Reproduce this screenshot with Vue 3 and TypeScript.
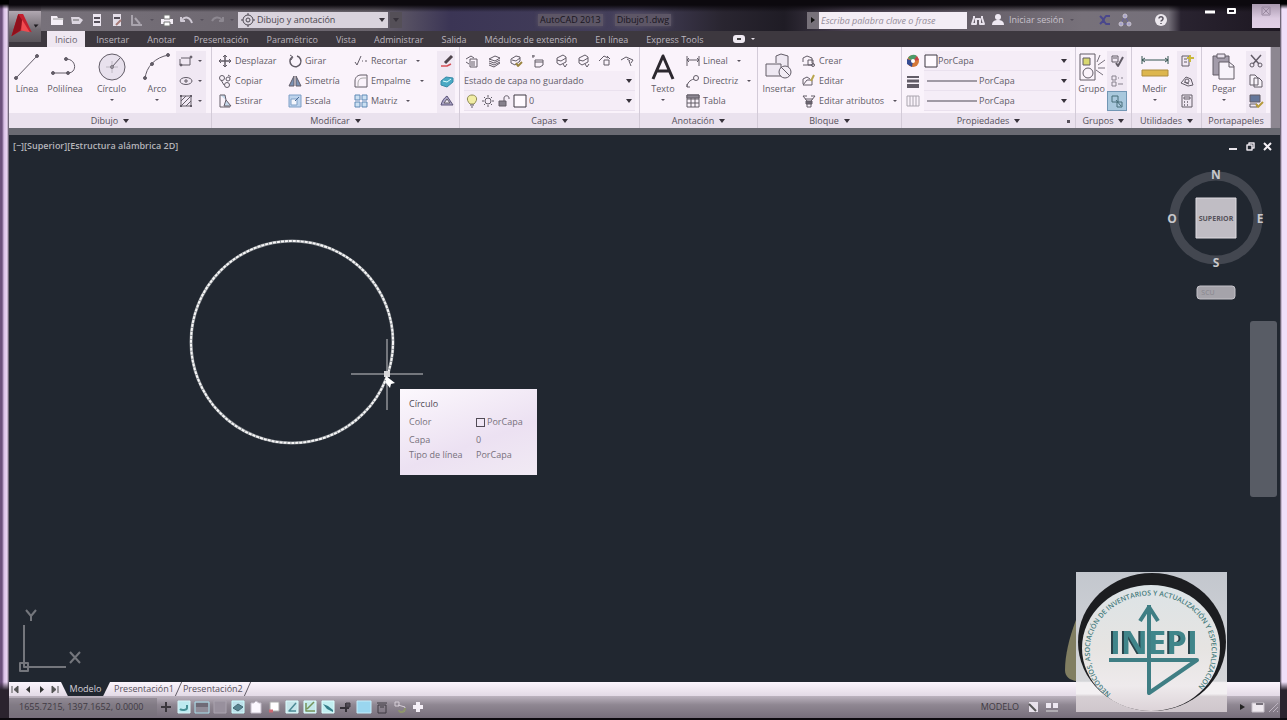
<script setup lang="ts">
import { ref } from 'vue'

interface Tool { label: string; icon: string; caret?: boolean }

const icons: Record<string, string> = {
  open: '<path d="M1 3h6l1 2h5v7H1z" fill="#f4eef6" stroke="none"/><path d="M3 6h11" stroke="#999"/>',
  folder: '<path d="M1 4h8l4 3-3 4H2z" fill="#dcd6e0" stroke="none"/><path d="M3 7h6" stroke="#666"/>',
  save: '<path d="M3 1h8v12H3z" fill="#ece6f0" stroke="none"/><path d="M4 5h6M4 9h6" stroke="#55505a" stroke-width="2"/>',
  saveAs: '<path d="M3 1h8v12H3z" fill="#e4dee8" stroke="none"/><path d="M4 5h6" stroke="#55505a" stroke-width="2"/><path d="M6 12l5-5" stroke="#a87c78" stroke-width="2"/>',
  cloud: '<path d="M2 2v10h10" stroke="#a9a4ad" stroke-width="2"/><path d="M5 5l5 6" stroke="#a9a4ad" stroke-width="2"/>',
  print: '<path d="M1 6h12v5H1z" fill="#f4eef6" stroke="none"/><path d="M4 2h6v4H4zM4 9h6v4H4z" fill="#fff" stroke="#777"/>',
  undo: '<path d="M1 4v4h4M2 7c3-4 8-3 10 3" stroke="#cfc9d4" stroke-width="2"/>',
  redo: '<path d="M13 4v4H9M12 7C9 3 4 4 2 8" stroke="#8d8891" stroke-width="2"/>',
  gear: '<circle cx="7" cy="7" r="5"/><circle cx="7" cy="7" r="2"/><path d="M7 0v2M7 12v2M0 7h2M12 7h2"/>',
  binoculars: '<path d="M3 3v2L1 11h4V6h4v5h4L11 5V3" stroke="#e8e2ec" stroke-width="2"/>',
  user: '<circle cx="7" cy="4" r="3" fill="#eee8f2" stroke="none"/><path d="M1 12c0-4 3-5 6-5s6 1 6 5z" fill="#eee8f2" stroke="none"/>',
  exchange: '<path d="M2 3l4 4-4 4M12 3H8l-3 4 3 4h4" stroke="#4a478c" stroke-width="2"/>',
  network: '<path d="M7 3L3 11h8z" stroke="#6864a4"/><circle cx="7" cy="3" r="2" fill="#a8a4cc"/><circle cx="3" cy="11" r="2" fill="#a8a4cc"/><circle cx="11" cy="11" r="2" fill="#a8a4cc"/>',
  help: '<circle cx="7" cy="7" r="6" fill="#ece8ee" stroke="none"/><path d="M5 5.500C5 3 9 3 9 5.500S7 7 7 8.500M7 10v1" stroke="#5a5560" stroke-width="1.500"/>',
  line: '<path d="M3 25L24 3"/><circle cx="3" cy="25" r="1.500" fill="currentColor"/><circle cx="24" cy="3" r="1.500" fill="currentColor"/>',
  polyline: '<path d="M2 20h15c9 0 9-13-1-14"/><circle cx="2" cy="20" r="1.500" fill="currentColor"/><circle cx="17" cy="20" r="1.500" fill="currentColor"/><circle cx="15" cy="6" r="1.500" fill="currentColor"/>',
  circle: '<circle cx="14" cy="14" r="13" fill="#e8e1ed"/><path d="M14 14l8-9"/><circle cx="14" cy="14" r="1.500" fill="currentColor"/><path d="M8 14h12M14 8v12" stroke="#b3adb8" stroke-width=".8"/>',
  arc: '<path d="M2 26C3 14 12 4 26 2"/><circle cx="2" cy="25" r="1.500" fill="currentColor"/><circle cx="9" cy="11" r="1.500" fill="currentColor"/><circle cx="25" cy="2" r="1.500" fill="currentColor"/>',
  rect: '<path d="M2 4h9v7H1V5"/><circle cx="12" cy="3" r="1" fill="currentColor"/><circle cx="2" cy="11" r="1" fill="currentColor"/>',
  ellipse: '<ellipse cx="7" cy="7" rx="6" ry="3.500"/><path d="M7 5v4M5 7h4"/>',
  hatch: '<path d="M2 2h10v10H2z"/><path d="M2 7l5-5M2 12L12 2M7 12l5-5"/><path d="M1 1h2v2H1zM11 1h2v2h-2zM1 11h2v2H1zM11 11h2v2h-2z" fill="currentColor" stroke="none"/>',
  move: '<path d="M7 1v12M1 7h12" stroke-width="1.500"/><path d="M5 3l2-2 2 2M5 11l2 2 2-2M3 5L1 7l2 2M11 5l2 2-2 2"/>',
  copy: '<circle cx="4" cy="4" r="2.500"/><circle cx="10" cy="5" r="2"/><circle cx="9" cy="11" r="2.500"/><path d="M3 6l3 5M10 1l3 2"/>',
  stretch: '<path d="M2 1v12h10"/><path d="M2 1h5l1 5M6 12l2-6 5 6z" fill="#c6d8ea"/>',
  rotate: '<path d="M4 3a5.500 5.500 0 1 0 5-1" stroke-width="1.500"/><path d="M2 1l3 2-2 3"/>',
  mirror: '<path d="M6 2v10H1zM8 2v10h5z" fill="#7a92b4"/>',
  scale: '<path d="M1 1h12v12H1z" fill="#bdd3ec" stroke="#7f9fc6"/><path d="M3 5h6v6H3z" fill="#f4f6fc" stroke="#7f9fc6"/><path d="M7 7l4-4" stroke="#4a6a96"/>',
  trim: '<path d="M1 8l2 3 4-9M8 7h1M11 7h2"/>',
  fillet: '<path d="M1 13V7c0-4 3-6 6-6h6v12z"/><path d="M4 13V9c0-3 2-5 5-5h4" stroke="#aaa"/>',
  array: '<path d="M1 1h5v5H1zM8 1h5v5H8zM1 8h5v5H1zM8 8h5v5H8z" fill="#cce0f2" stroke="#5f89b5"/>',
  erase: '<path d="M12 2L5 9" stroke="#4d434b" stroke-width="3"/><path d="M1 12h6l4-2" stroke="#d65058" stroke-width="1.500"/>',
  explode: '<path d="M1 7l5-4 7 1v4l-6 5-6-2z" fill="#4aa9c4" stroke="#378aa8"/><path d="M3 7l4 1 4-3" stroke="#dff"/>',
  offset: '<path d="M1 11c1-4 3-7 6-9l6 9z" fill="#aba4c6" stroke="#5a5378"/><path d="M4 9l3-4 3 4z" fill="#efe9f4"/>',
  layers: '<path d="M2 5l6-3 5 2-5 3zM2 7l5 2 6-3M2 9l5 2 6-3M2 11l5 2 6-4"/>',
  layerA: '<path d="M1 5l5-3 3 2M1 8l3 2M5 5h7v8H5zM7 7v5M9 7v5"/>',
  layerB: '<path d="M2 5l5-3 4 1v4l-5 4-4-2zM3 6l4 1 4-3"/><path d="M7 9l2 3 4-4" stroke="#9b8540" stroke-width="2"/>',
  layerC: '<path d="M1 2h3M2 1v3M4 6h8v5l-3 2H4zM4 8h8"/>',
  layerD: '<path d="M3 4l6-3 3 2v5L6 11l-3-2zM3 6l4 1 5-3"/><path d="M9 10l2 3 2-3"/>',
  layerE: '<path d="M1 7l5-5 4 2M6 6h5v5H6zM9 2l3 3"/>',
  layerF: '<path d="M1 6l5-3 7 3-2 3M9 7l2 5M7 5l3 2"/>',
  bulb: '<path d="M5 10C0 5 3 1 7 1s7 4 2 9z" fill="#f1eca4" stroke="#8e8a55"/><path d="M5 11h4M6 13h2"/>',
  sun: '<circle cx="7" cy="7" r="3"/><path d="M7 1v2M7 11v2M1 7h2M11 7h2M3 3l1 1M10 10l1 1M11 3l-1 1M3 11l1-1"/>',
  lock: '<path d="M2 7h7v5H2z" fill="#86818c"/><path d="M7 7V4c0-3 5-3 5 0v1"/>',
  square: '<path d="M1 1h12v12H1z" fill="#fffaff" stroke="#3e3942"/>',
  dimension: '<path d="M1 2v10M13 2v10M1 6h12M3 4L1 6l2 2M11 4l2 2-2 2"/>',
  leader: '<path d="M1 13C1 9 4 6 8 5"/><circle cx="10" cy="4" r="2.500"/><path d="M1 10v3h3"/>',
  table: '<path d="M1 1h12v12H1zM1 5h12M1 9h12M5 2v11M9 2v11"/><path d="M1 1h12v3H1z" fill="#8e8894"/>',
  insert: '<path d="M1 11h15v12H1zM11 10V3l5-2 7 2v11" fill="#eee8f2"/><circle cx="20" cy="19" r="6" fill="#f2ecf5"/><path d="M16 14l9 9"/>',
  create: '<path d="M1 8V4l4-2 5 2v5M1 11h9M6 6h5v5H6z"/><circle cx="11" cy="11" r="1.500"/>',
  edit: '<path d="M1 10V5l4-2 3 2M1 11h9V6H5z"/><path d="M9 7l3-6" stroke="#b8a54d" stroke-width="2"/>',
  attributes: '<path d="M1 2l4 5v6h4V7l4-5M3 5h8M6 9h2M1 2h4M9 2h4"/><path d="M4 7h6v3H4z" fill="#6b6571"/>',
  wheel: '<circle cx="7" cy="7" r="6" fill="#d57838" stroke="none"/><path d="M7 7L2 4a6 6 0 0 1 9-2z" fill="#4d9a6b" stroke="none"/><path d="M7 7L1 5v5l5 3z" fill="#354c93" stroke="none"/><path d="M7 7l4-5 2 4z" fill="#c4414a" stroke="none"/><circle cx="7" cy="7" r="2" fill="#fff" stroke="none"/>',
  weights: '<path d="M1 3h12" stroke-width="2"/><path d="M1 7h12" stroke-width="3"/><path d="M1 12h12" stroke-width="4"/>',
  linetypes: '<path d="M1 2h12v10H1zM4 2v10M7 2v10M10 2v10" stroke="#aaa5af"/>',
  group: '<path d="M2 1h15v26H2z"/><path d="M5 5h7v7H5z" fill="#d9d871"/><circle cx="10" cy="20" r="5"/><path d="M19 9l3-7M20 12l7-5M20 15h7M18 17l7 5" stroke="#77717c"/>',
  groupEdit: '<path d="M2 2h6v6H2zM3 4h4"/><path d="M6 9l2 3 5-9" stroke-width="2"/>',
  ungroup: '<path d="M2 2h4v4H2zM2 8h4v4H2zM8 4h1M11 4h2M8 10h5" stroke="#87818d"/>',
  groupPick: '<path d="M2 2h6v6H2zM7 8h5v5H7zM6 6l5 6" stroke="#466d78"/>',
  measure: '<path d="M1 3v8M27 3v8M1 7h26M4 5L1 7l3 2M24 5l3 2-3 2" stroke="#345450"/><path d="M1 17h26v6H1z" fill="#ddb64e" stroke="#ae8d40"/>',
  select: '<path d="M2 2h7v10H2zM4 5h3M4 8h3"/><path d="M10 1v7M7 4h7" stroke="#c9b83c" stroke-width="2"/>',
  idPoint: '<path d="M1 9l5-6 5 2 2 6-5 1zM4 8l5 2"/><circle cx="7" cy="7" r="2"/>',
  calculator: '<path d="M2 1h10v12H2zM4 3h6v2H4z"/><path d="M4 8h1M7 8h1M10 8h0M4 11h1M7 11h1" stroke-width="1.500"/>',
  paste: '<path d="M3 3h16v19H3z" fill="#a39caa"/><path d="M7 1h8v4H7z" fill="#e8e1ec"/><path d="M9 9h10l5 4v13H9z" fill="#f8f3fa"/><path d="M19 9v5h5"/>',
  cut: '<path d="M2 1l8 9M12 1L4 10" stroke-width="1.500"/><circle cx="3" cy="11" r="2"/><circle cx="11" cy="11" r="2"/>',
  clipboard: '<path d="M1 1h5l3 3v7H1zM5 4h5l3 3v6H5z" fill="#f8f3fa"/>',
  match: '<path d="M1 1h10v7H1z" fill="#64769a"/><path d="M1 10h7v3H1z"/><path d="M7 10l2 3 5-5" stroke="#b69b3a" stroke-width="2"/>',
  plus: '<path d="M7 2v10M2 7h10" stroke="#3b373d" stroke-width="2"/>',
  snap: '<path d="M1 1h12v12H1z" fill="#bdeaf0" stroke="#d8f4f8"/><path d="M10 5v3c0 2-5 3-7 1" stroke="#469096" stroke-width="2"/>',
  grid: '<path d="M0 2h14v11H0z" fill="#8f8b97" stroke="#aaddea"/><path d="M1 3h12v4H1z" fill="#6f6a76" stroke="none"/>',
  ortho: '<path d="M1 1h12v12H1z" fill="#98909d" stroke="#aaa3af"/>',
  polar: '<path d="M1 1h12v12H1z" fill="#bde0ea" stroke="#cff"/><path d="M2 8l5-4 5 3-5 4z" fill="#578591" stroke="#456a74"/>',
  page: '<path d="M2 3h3l2-2 3 2h2v10H2z" fill="#fcf8ff" stroke="#c5becb"/>',
  pageRed: '<path d="M3 2h9v9H3z" fill="#fff" stroke="#aaa"/><path d="M2 11h4" stroke="#cb6872" stroke-width="3"/>',
  angle: '<path d="M1 1h12v12H1z" fill="#c6e5ea" stroke="#dff"/><path d="M11 3L4 11h7" stroke="#4c8995" stroke-width="1.500"/>',
  ducs: '<path d="M1 1h12v12H1z" fill="#c4e8e9" stroke="#dff"/><path d="M3 3v8h9M4 9l7-7" stroke="#75935b" stroke-width="1.500"/>',
  dyn: '<path d="M1 1h12v12H1z" fill="#c2eef0" stroke="#dff"/><path d="M2 4l5 2 5 4v2L6 9z" fill="#347e89" stroke="none"/>',
  lwt: '<path d="M1 8h9M7 3v9" stroke="#343037" stroke-width="2"/><path d="M7 3h4v4H7z" fill="#514b55"/>',
  fill: '<path d="M0 1h14v12H0z" fill="#9ad6ef" stroke="#c6edfa"/>',
  bin: '<path d="M2 3h10M3 5h8v8H3zM5 7h4"/>',
  cycle: '<path d="M2 2h4v4H2zM5 5l7 2-1 5" stroke="#d5cdd6"/><path d="M12 8c0 5-6 5-6 2" stroke="#8d946c" stroke-width="2"/>',
  plusWhite: '<path d="M7 2v10M2 7h10" stroke="#f5eff7" stroke-width="4"/>',
  sheet: '<path d="M2 2h9v10H2z" fill="#e9e2ec" stroke="none"/><path d="M2 4l7 7" stroke="#555" stroke-width="2"/>',
  sheets: '<path d="M1 3h5v5H1zM8 3h5v5H8z" fill="#eee8f2" stroke="none"/><path d="M1 11h12" stroke="#ddd"/>',
  screen: '<path d="M1 3h12v9H1z" fill="#eee8ee" stroke="#c7c0c9"/><path d="M5 3h7v2H5z" fill="#77717a" stroke="none"/>',
  small: '<path d="M4 4l5 3-5 3" fill="#222" stroke="none"/>',
  grip: '<path d="M12 3L3 12M12 7l-5 5M12 11l-1 1" stroke="#bcb3c0"/>',
}

const quickTools: [string, string, boolean][] = [
  ['open', 'Nuevo', false], ['folder', 'Abrir', false], ['save', 'Guardar', false],
  ['saveAs', 'Guardar como', false], ['cloud', 'Nube', true], ['print', 'Trazar', false],
  ['undo', 'Deshacer', true], ['redo', 'Rehacer', true],
]
const tabs = ['Inicio', 'Insertar', 'Anotar', 'Presentación', 'Paramétrico', 'Vista', 'Administrar', 'Salida', 'Módulos de extensión', 'En línea', 'Express Tools']
const activeTab = ref('Inicio')

const drawTools: Tool[] = [
  { label: 'Línea', icon: 'line' }, { label: 'Polilínea', icon: 'polyline' },
  { label: 'Círculo', icon: 'circle', caret: true }, { label: 'Arco', icon: 'arc', caret: true },
]
const modifyColumns: Tool[][] = [
  [{ label: 'Desplazar', icon: 'move' }, { label: 'Copiar', icon: 'copy' }, { label: 'Estirar', icon: 'stretch' }],
  [{ label: 'Girar', icon: 'rotate' }, { label: 'Simetría', icon: 'mirror' }, { label: 'Escala', icon: 'scale' }],
  [{ label: 'Recortar', icon: 'trim', caret: true }, { label: 'Empalme', icon: 'fillet', caret: true }, { label: 'Matriz', icon: 'array', caret: true }],
]
const noteTools: Tool[] = [
  { label: 'Lineal', icon: 'dimension', caret: true }, { label: 'Directriz', icon: 'leader', caret: true }, { label: 'Tabla', icon: 'table' },
]
const blockTools: Tool[] = [
  { label: 'Crear', icon: 'create' }, { label: 'Editar', icon: 'edit' }, { label: 'Editar atributos', icon: 'attributes', caret: true },
]
const layerTools = ['layerA', 'layers', 'layerB', 'layerC', 'layerD', 'layerD', 'layerE', 'layerF']
const statusTools = ['plus', 'snap', 'grid', 'ortho', 'polar', 'page', 'pageRed', 'angle', 'ducs', 'dyn', 'lwt', 'fill', 'bin', 'cycle', 'plusWhite']
</script>

<template>
  <div class="window">
    <div class="frame">
      <header class="header">
        <button class="app-button" aria-label="Menú de la aplicación">
          <svg viewBox="0 0 32 32" class="app-logo">
            <path d="M9 3h5l9 19-9-3-12 7z" fill="#c41f2d" />
            <path d="M9 3L2 26l9-6 3-9z" fill="#8f101c" />
            <path d="M13 9l8 13-9-2z" fill="#f04b50" />
            <path d="M25 14h5l-3 3z" fill="#1d1a1f" />
          </svg>
        </button>

        <div class="titlebar">
          <div class="quick">
            <template v-for="[icon, name, caret] in quickTools" :key="name">
              <button class="plain" :aria-label="name"><svg class="ico" viewBox="0 0 14 14" v-html="icons[icon]" /></button>
              <i v-if="caret" class="tiny-caret"></i>
            </template>
          </div>
          <label class="workspace">
            <svg class="ico" viewBox="0 0 14 14" v-html="icons.gear" />
            <select aria-label="Espacio de trabajo"><option>Dibujo y anotación</option></select>
            <i class="caret"></i>
          </label>
          <button class="more" aria-label="Personalizar"><i class="caret"></i></button>
          <div class="doc-title"><span>AutoCAD 2013</span><span>Dibujo1.dwg</span></div>
          <button class="search-toggle" aria-label="Contraer"><i class="arrow-right"></i></button>
          <input class="search" type="text" aria-label="Buscar" placeholder="Escriba palabra clave o frase" />
          <div class="info">
            <button class="plain" aria-label="Buscar ahora"><svg class="ico" viewBox="0 0 14 14" v-html="icons.binoculars" /></button>
            <button class="plain sign-in"><svg class="ico" viewBox="0 0 14 14" v-html="icons.user" />Iniciar sesión</button>
            <i class="tiny-caret"></i>
            <button class="plain exchange" aria-label="Exchange"><svg class="ico" viewBox="0 0 14 14" v-html="icons.exchange" /></button>
            <button class="plain" aria-label="Conexión"><svg class="ico" viewBox="0 0 14 14" v-html="icons.network" /></button>
            <button class="plain help" aria-label="Ayuda"><svg class="ico" viewBox="0 0 14 14" v-html="icons.help" /></button>
          </div>
          <div class="window-buttons">
            <button class="plain" aria-label="Minimizar"><svg class="ico" viewBox="0 0 14 14"><path d="M2 8h10" stroke="#fff" stroke-width="3" /></svg></button>
            <button class="plain" aria-label="Maximizar"><svg class="ico" viewBox="0 0 14 14"><path d="M4 5h7v4H4z" stroke="#fff" stroke-width="2" /></svg></button>
            <button class="plain close" aria-label="Cerrar"><svg class="ico" viewBox="0 0 14 14"><path d="M3 3h8v8H3zM4 4l6 6M10 4l-6 6" stroke="#98889f" /></svg></button>
          </div>
        </div>

        <nav class="tabs">
          <button v-for="tab in tabs" :key="tab" class="tab" :class="{ active: tab === activeTab }" @click="activeTab = tab">{{ tab }}</button>
          <button class="tab ribbon-mode" aria-label="Minimizar cinta"><span></span><i class="tiny-caret light"></i></button>
        </nav>
      </header>

      <section class="ribbon">
        <section class="panel">
          <div class="body draw">
            <button v-for="t in drawTools" :key="t.label" class="big">
              <svg viewBox="0 0 28 28" v-html="icons[t.icon]" /><span>{{ t.label }}</span><i v-if="t.caret" class="tiny-caret"></i>
            </button>
            <div class="stack outlined">
              <button v-for="n in ['rect', 'ellipse', 'hatch']" :key="n" class="small" :aria-label="n"><svg class="ico" viewBox="0 0 14 14" v-html="icons[n]" /><i class="tiny-caret"></i></button>
            </div>
          </div>
          <button class="panel-title">Dibujo<i class="caret"></i></button>
        </section>

        <section class="panel">
          <div class="body modify">
            <div v-for="(col, i) in modifyColumns" :key="i" class="stack">
              <button v-for="t in col" :key="t.label" class="small"><svg class="ico" viewBox="0 0 14 14" v-html="icons[t.icon]" />{{ t.label }}<i v-if="t.caret" class="tiny-caret"></i></button>
            </div>
            <div class="stack outlined">
              <button v-for="n in ['erase', 'explode', 'offset']" :key="n" class="small" :aria-label="n"><svg class="ico" viewBox="0 0 14 14" v-html="icons[n]" /></button>
            </div>
          </div>
          <button class="panel-title">Modificar<i class="caret"></i></button>
        </section>

        <section class="panel">
          <div class="body stack layers">
            <div class="layer-tools">
              <button v-for="(n, i) in layerTools" :key="i" class="small" :aria-label="'Capa ' + i"><svg class="ico" viewBox="0 0 14 14" v-html="icons[n]" /></button>
            </div>
            <label class="combo"><select aria-label="Estado de capa"><option>Estado de capa no guardado</option></select><i class="caret"></i></label>
            <label class="combo layer-combo">
              <svg v-for="n in ['bulb', 'sun', 'lock', 'square']" :key="n" class="ico" viewBox="0 0 14 14" v-html="icons[n]" />
              <select aria-label="Capa"><option>0</option></select><i class="caret"></i>
            </label>
          </div>
          <button class="panel-title">Capas<i class="caret"></i></button>
        </section>

        <section class="panel">
          <div class="body notes">
            <button class="big">
              <svg viewBox="0 0 28 28"><path d="M4 26L14 3l10 23M8 18h12" stroke="#2c282f" stroke-width="3" /></svg><span>Texto</span><i class="tiny-caret"></i>
            </button>
            <div class="stack">
              <button v-for="t in noteTools" :key="t.label" class="small"><svg class="ico" viewBox="0 0 14 14" v-html="icons[t.icon]" />{{ t.label }}<i v-if="t.caret" class="tiny-caret"></i></button>
            </div>
          </div>
          <button class="panel-title">Anotación<i class="caret"></i></button>
        </section>

        <section class="panel">
          <div class="body blocks">
            <button class="big"><svg viewBox="0 0 28 28" v-html="icons.insert" /><span>Insertar</span></button>
            <div class="stack">
              <button v-for="t in blockTools" :key="t.label" class="small"><svg class="ico" viewBox="0 0 14 14" v-html="icons[t.icon]" />{{ t.label }}<i v-if="t.caret" class="tiny-caret"></i></button>
            </div>
          </div>
          <button class="panel-title">Bloque<i class="caret"></i></button>
        </section>

        <section class="panel">
          <div class="body stack properties">
            <label class="property"><svg class="ico" viewBox="0 0 14 14" v-html="icons.wheel" />
              <span class="combo"><svg class="ico" viewBox="0 0 14 14" v-html="icons.square" /><select aria-label="Color"><option>PorCapa</option></select><i class="caret"></i></span>
            </label>
            <label class="property"><svg class="ico" viewBox="0 0 14 14" v-html="icons.weights" />
              <span class="combo"><i class="rule"></i><select aria-label="Grosor de línea"><option>PorCapa</option></select><i class="caret"></i></span>
            </label>
            <label class="property"><svg class="ico" viewBox="0 0 14 14" v-html="icons.linetypes" />
              <span class="combo"><i class="rule"></i><select aria-label="Tipo de línea"><option>PorCapa</option></select><i class="caret"></i></span>
            </label>
          </div>
          <button class="panel-title">Propiedades<i class="caret"></i><i class="launcher"></i></button>
        </section>

        <section class="panel">
          <div class="body pair">
            <button class="big"><svg viewBox="0 0 28 28" v-html="icons.group" /><span>Grupo</span></button>
            <div class="stack outlined">
              <button v-for="n in ['groupEdit', 'ungroup', 'groupPick']" :key="n" class="small" :class="{ pressed: n === 'groupPick' }" :aria-label="n"><svg class="ico" viewBox="0 0 14 14" v-html="icons[n]" /></button>
            </div>
          </div>
          <button class="panel-title">Grupos<i class="caret"></i></button>
        </section>

        <section class="panel">
          <div class="body pair">
            <button class="big"><svg viewBox="0 0 28 28" v-html="icons.measure" /><span>Medir</span><i class="tiny-caret"></i></button>
            <div class="stack outlined">
              <button v-for="n in ['select', 'idPoint', 'calculator']" :key="n" class="small" :aria-label="n"><svg class="ico" viewBox="0 0 14 14" v-html="icons[n]" /></button>
            </div>
          </div>
          <button class="panel-title">Utilidades<i class="caret"></i></button>
        </section>

        <section class="panel">
          <div class="body pair">
            <button class="big"><svg viewBox="0 0 28 28" v-html="icons.paste" /><span>Pegar</span><i class="tiny-caret"></i></button>
            <div class="stack outlined">
              <button v-for="n in ['cut', 'clipboard', 'match']" :key="n" class="small" :aria-label="n"><svg class="ico" viewBox="0 0 14 14" v-html="icons[n]" /></button>
            </div>
          </div>
          <button class="panel-title">Portapapeles</button>
        </section>
      </section>

      <main class="canvas">
        <div class="view-head">
          <span>[−][Superior][Estructura alámbrica 2D]</span>
          <div class="view-buttons">
            <button class="plain" aria-label="Minimizar vista"><svg viewBox="0 0 9 9"><path d="M0 7h8" stroke="#e8e4ea" stroke-width="2" /></svg></button>
            <button class="plain" aria-label="Restaurar vista"><svg viewBox="0 0 9 9"><path d="M1 3h5v5H1zM3 3V1h5v5H6" stroke="#e8e4ea" stroke-width="1.500" /></svg></button>
            <button class="plain" aria-label="Cerrar vista"><svg viewBox="0 0 9 9"><path d="M1 1l7 7M8 1L1 8" stroke="#f4f0f5" stroke-width="2" /></svg></button>
          </div>
        </div>

        <svg class="drawing" width="440" height="340" viewBox="0 0 440 340">
          <circle cx="283" cy="207" r="101" stroke="#8f9398" stroke-width="3" />
          <circle cx="283" cy="207" r="101" stroke="#f6f6f6" stroke-width="2" stroke-dasharray="3 1" />
          <path d="M342 239h72M378 204v71" stroke="#74777d" stroke-width="2" />
          <path d="M375 236h6v6h-6z" fill="#d8d8da" />
          <path d="M377 241l9 7-4 1-1 4-4-5z" fill="#fff" />
        </svg>

        <dl class="tooltip">
          <div class="tip-title">Círculo</div>
          <dt>Color</dt><dd><i class="swatch"></i>PorCapa</dd>
          <dt>Capa</dt><dd>0</dd>
          <dt>Tipo de línea</dt><dd>PorCapa</dd>
        </dl>

        <svg class="view-cube" width="100" height="140" viewBox="0 0 100 140">
          <circle cx="50" cy="53" r="42" stroke="#434750" stroke-width="9" />
          <path d="M30 33h40v40H30z" fill="#c0bdc4" stroke="#dedbe0" />
          <g class="compass">
            <text x="50" y="14">N</text><text x="50" y="102">S</text><text x="6" y="58">O</text><text x="94" y="58">E</text>
          </g>
          <text class="face" x="50" y="56">SUPERIOR</text>
          <rect x="31" y="121" width="38" height="13" rx="3" fill="#a5a3aa" stroke="#c4c2c8" />
          <text class="scp" x="42" y="130">SCU</text>
        </svg>

        <div class="navbar"></div>

        <svg class="ucs" width="76" height="64" viewBox="0 0 76 64">
          <path d="M15 17v42h42M11 55h8v8h-8zM17 2l5 6 5-6M22 8v5M61 44l10 11M71 44L61 55" stroke="#74767c" stroke-width="2" />
        </svg>
      </main>

      <nav class="sheets">
        <button class="nav-button" aria-label="Primera"><svg viewBox="0 0 9 9"><path d="M1 1v7M7 1L3 4.500 7 8z" fill="#555" stroke="#555" /></svg></button>
        <button class="nav-button" aria-label="Anterior"><svg viewBox="0 0 9 9"><path d="M6 1L2 4.500 6 8z" fill="#333" /></svg></button>
        <button class="nav-button" aria-label="Siguiente"><svg viewBox="0 0 9 9"><path d="M3 1l4 3.500L3 8z" fill="#333" /></svg></button>
        <button class="nav-button" aria-label="Última"><svg viewBox="0 0 9 9"><path d="M8 1v7M2 1l4 3.500L2 8z" fill="#555" stroke="#555" /></svg></button>
        <button class="sheet current">Modelo</button>
        <button class="sheet">Presentación1</button><i class="slash"></i>
        <button class="sheet">Presentación2</button><i class="slash"></i>
      </nav>

      <footer class="status">
        <output class="coords">1655.7215, 1397.1652, 0.0000</output>
        <div class="status-tools">
          <button v-for="n in statusTools" :key="n" class="plain" :aria-label="n"><svg class="ico" viewBox="0 0 14 14" v-html="icons[n]" /></button>
        </div>
        <div class="status-right">
          <button class="plain model">MODELO</button>
          <button class="plain" aria-label="Presentación"><svg class="ico" viewBox="0 0 14 14" v-html="icons.sheet" /></button>
          <button class="plain" aria-label="Presentaciones"><svg class="ico" viewBox="0 0 14 14" v-html="icons.sheets" /></button>
        </div>
        <div class="status-end">
          <button class="plain" aria-label="Opciones"><svg class="ico" viewBox="0 0 14 14" v-html="icons.small" /></button>
          <button class="plain" aria-label="Pantalla limpia"><svg class="ico" viewBox="0 0 14 14" v-html="icons.screen" /></button>
          <svg class="ico" viewBox="0 0 14 14" v-html="icons.grip" />
        </div>
      </footer>
    </div>

    <svg class="emblem" width="164" height="140" viewBox="0 0 164 140">
      <defs>
        <linearGradient id="paper" x1="0" y1="0" x2="0" y2="1">
          <stop offset="0" stop-color="#c3c7ce" /><stop offset=".78" stop-color="#d5d6d9" />
          <stop offset=".79" stop-color="#f3f0f2" /><stop offset=".87" stop-color="#f3f0f2" />
          <stop offset=".89" stop-color="#d6cfd3" /><stop offset="1" stop-color="#cfc6cc" />
        </linearGradient>
        <linearGradient id="disc" x1="0" y1="0" x2="0" y2="1">
          <stop offset="0" stop-color="#dce3e6" /><stop offset=".5" stop-color="#e6e4e2" />
          <stop offset=".8" stop-color="#eeeaec" /><stop offset="1" stop-color="#dcd3d8" />
        </linearGradient>
      </defs>
      <path d="M13 48C6 66 2 84 2 98c0 7 5 10 11 11z" fill="#817e61" />
      <rect x="13" width="151" height="140" fill="url(#paper)" />
      <ellipse cx="89" cy="70" rx="74" ry="69" fill="#1c1d20" />
      <ellipse cx="88" cy="76" rx="69" ry="63" fill="url(#disc)" />
      <path id="ring" d="M48 122A61 56 0 1 1 133 117" />
      <text class="ring-text"><textPath href="#ring">NEGOCIOS, ASOCIACIÓN DE INVENTARIOS Y ACTUALIZACIÓN Y ESPECIALIZACIÓN</textPath></text>
      <text class="name" x="91" y="82">INEPI</text>
      <path d="M46 88h88L86 121V33M77 49l9-14 9 14" stroke="#3f7e84" stroke-width="4" />
    </svg>
  </div>
</template>

<style>
body { margin: 0; background: #17131b; }
</style>

<style scoped>
.window {
  position: relative;
  box-sizing: border-box;
  min-height: 100vh;
  display: flex;
  padding: 0 7px 2px 9px;
  background:
    linear-gradient(#000 4px, transparent 9px),
    linear-gradient(#0c090e, #0c090e) bottom / 100% 2px no-repeat,
    linear-gradient(transparent 682px, #2b232e 690px),
    linear-gradient(90deg, #6c517c 2px, #d9bfe6 4px, #ecd8f4 7px, #4b4453 9px, #6f6675 50%, #463f4d calc(100% - 7px), #f0dff8 calc(100% - 5px));
  font: 9px/12px "Open Sans", "Noto Sans", sans-serif;
  color: #625c67;
}
.frame { flex: 1; min-width: 0; display: flex; flex-direction: column; }
button, select, input { font: inherit; color: inherit; border: 0; padding: 0; margin: 0; background: none; border-radius: 0; }
button { white-space: nowrap; cursor: pointer; }
svg { fill: none; stroke-linejoin: round; flex: none; display: block; overflow: visible; }
.ico { width: 14px; height: 14px; stroke: currentColor; }
.big svg { width: 28px; height: 28px; stroke: currentColor; }
.plain { display: flex; align-items: center; gap: 4px; }
.caret { flex: none; border: 3px solid transparent; border-top: 4px solid #37323b; border-bottom: 0; }
.tiny-caret { flex: none; border: 2px solid transparent; border-top: 2px solid #57515c; border-bottom: 0; }
.tiny-caret.light { border-top-color: #e5e0e8; }

.header { display: grid; grid-template-columns: 32px 1fr; grid-template-rows: 31px 16px; background: linear-gradient(#0c090e 5px, #5d565f 11px, #3d383f 31px); }
.app-button { grid-row: 1 / 3; margin: 11px 0 5px; background: linear-gradient(#b1a8b1, #716b72 60%, #5a555b); }
.app-logo { width: 32px; height: 31px; }
.titlebar {
  display: flex;
  align-items: center;
  padding-top: 9px;
  box-sizing: border-box;
  background:
    linear-gradient(#0c090e 5px, transparent 12px),
    linear-gradient(90deg, #77717a, #69636c 27%, #3b3555 33%, #45405b 48%, #292530 55%, #1f1c25 60%, #494050 65%, #665f69 75%, #77717a 84%, #75707a 91%, #292330 92%, #1d1721);
}
.quick { width: 188px; flex: none; display: flex; align-items: center; gap: 6px; padding-left: 9px; }
.workspace { width: 150px; height: 16px; flex: none; box-sizing: border-box; display: flex; align-items: center; gap: 2px; padding: 0 3px; background: #d9d3dd; color: #4c4750; }
.workspace select, .combo select { flex: 1; min-width: 0; appearance: none; outline: 0; }
.more { width: 12px; height: 16px; margin-left: 2px; background: #544f57; display: flex; align-items: center; justify-content: center; }
.doc-title { flex: 1; display: flex; justify-content: center; gap: 12px; color: #19151e; }
.doc-title span { background: #5d5666; padding: 0 2px; box-shadow: 0 0 4px #5d5666; }
.search-toggle { width: 12px; height: 17px; background: #77717a; display: flex; align-items: center; justify-content: center; }
.arrow-right { border: 3px solid transparent; border-left: 4px solid #111; border-right: 0; }
.search { width: 148px; height: 17px; box-sizing: border-box; padding: 0 2px; background: #f3edf5; font-style: italic; }
.search::placeholder { color: #938c98; opacity: 1; }
.info { width: 212px; flex: none; display: flex; align-items: center; gap: 6px; padding-left: 4px; box-sizing: border-box; color: #c8c2cc; }
.exchange { margin-left: 18px; }
.help { margin-left: 16px; }
.window-buttons { width: 101px; align-self: flex-start; margin-top: -5px; flex: none; display: flex; align-items: flex-start; justify-content: flex-end; gap: 7px; }
.window-buttons .close { width: 28px; height: 24px; margin-left: 7px; justify-content: center; align-items: flex-start; background: linear-gradient(#a898ae, #dccbe1 60%, #e2cfe6); }
.tabs { display: flex; align-items: stretch; gap: 4px; padding-left: 6px; color: #bbb5be; }
.tab { padding: 0 7px; line-height: 15px; }
.tab.active { background: #efe7f1; color: #67616c; padding: 0 8px; }
.ribbon-mode { display: flex; align-items: center; gap: 6px; margin-left: 12px; }
.ribbon-mode span { width: 4px; height: 2px; border: solid #efe9f1; border-width: 3px 4px; border-radius: 3px; background: #444; }

.ribbon {
  display: grid;
  grid-template-columns: 203fr 248fr 180fr 118fr 144fr 174fr 56fr 70fr 69fr;
  padding-right: 9px;
  border-bottom: 7px solid #696a72;
  background: #8d8791;
}
.panel { min-width: 0; display: flex; flex-direction: column; border-right: 1px solid #d3cbd8; background: #faf3fb; }
.body { height: 66px; box-sizing: border-box; padding-top: 4px; display: grid; }
.panel-title { position: relative; height: 15px; display: flex; align-items: center; justify-content: center; gap: 5px; background: #eae2ee; color: #57515c; }
.launcher { position: absolute; right: 5px; bottom: 5px; width: 3px; height: 3px; background: #57515c; }
.draw { grid-template-columns: 36px 38px 53px 36px 30px; column-gap: 1px; }
.modify { grid-template-columns: 70px 66px 83px 18px; padding-left: 6px; }
.notes { grid-template-columns: 46px 1fr; }
.blocks { grid-template-columns: 42px 1fr; column-gap: 2px; }
.pair { grid-template-columns: 1fr 20px; padding-right: 4px; }
.big { display: flex; flex-direction: column; align-items: center; min-width: 0; padding-top: 2px; }
.big span { margin-top: 2px; }
.big .tiny-caret { margin-top: 4px; }
.stack { display: grid; grid-template-rows: repeat(3, 20px); align-content: start; min-width: 0; }
.outlined { background: #f0e8f3; }
.outlined .small { padding-left: 3px; gap: 5px; }
.small { display: flex; align-items: center; gap: 3px; min-width: 0; }
.small .tiny-caret { margin-left: 6px; }
.outlined .tiny-caret { margin-left: 0; }
.pressed { background: #a9c8dd; outline: 1px solid #7296b4; outline-offset: -1px; }
.layers { padding: 4px 4px 0; }
.layer-tools { display: flex; justify-content: space-between; padding: 0 1px; }
.combo { display: flex; align-items: center; min-width: 0; flex: 1; padding-right: 3px; background: #f5edf7; border-bottom: 1px solid #eae1ee; }
.layer-combo { gap: 2px; padding-left: 1px; }
.properties { padding: 4px 5px 0 4px; }
.property { display: flex; align-items: center; gap: 4px; }
.property .combo { align-self: stretch; }
.rule { width: 50px; height: 2px; margin: 0 2px 0 3px; background: #a09aa5; }

.canvas { position: relative; flex: 1; min-height: 540px; background: #212730; }
.view-head { display: flex; justify-content: space-between; padding: 5px 8px 0 4px; color: #b5b5ba; font-weight: 600; }
.view-buttons { display: flex; gap: 8px; align-items: center; }
.view-buttons svg { width: 9px; height: 9px; }
.drawing { position: absolute; left: 0; top: 0; }
.tooltip {
  position: absolute; left: 391px; top: 254px; width: 137px; height: 86px; box-sizing: border-box; margin: 0; padding: 8px 9px 10px;
  display: grid; grid-template-columns: 67px 1fr; grid-template-rows: 14px 22px 14px 16px; align-items: center;
  background: linear-gradient(160deg, #fcf8fd, #ece1f2 60%, #f1eaf4); color: #77717c;
}
.tip-title { grid-column: 1 / 3; color: #514b56; }
.tooltip dt { white-space: nowrap; }
.tooltip dd { margin: 0; display: flex; align-items: center; gap: 2px; }
.swatch { width: 7px; height: 7px; border: 1px solid #514b56; }
.view-cube { position: absolute; right: 14px; top: 30px; }
.compass { font-size: 12px; font-weight: 700; text-anchor: middle; fill: #c7c7cb; }
.face { font-size: 7px; font-weight: 700; text-anchor: middle; fill: #56525a; }
.scp { font-size: 7px; text-anchor: middle; fill: #88868d; }
.navbar { position: absolute; right: 3px; top: 186px; width: 27px; height: 176px; border-radius: 3px; background: #585c65; }
.ucs { position: absolute; left: 0; bottom: 10px; }

.sheets { display: flex; height: 14px; align-items: stretch; background: linear-gradient(#fbf5fc, #e3dae6); color: #57515c; }
.nav-button { width: 13px; display: flex; align-items: center; justify-content: center; }
.nav-button svg { width: 9px; height: 9px; }
.sheet { padding: 0 4px; }
.current { width: 49px; padding: 0; background: #212730; color: #d5d0d8; clip-path: polygon(0 0, 100% 0, 86% 100%, 14% 100%); }
.slash { width: 1px; background: #605a65; transform: skewX(-24deg); }
.status { display: flex; align-items: center; height: 22px; background: linear-gradient(#bcb3bf, #8f8792 40%, #776e7b); color: #3f3a43; }
.coords { width: 148px; box-sizing: border-box; padding-left: 10px; line-height: 18px; background: #77717a88; }
.status-tools { display: flex; gap: 4px; padding-left: 2px; }
.status-right { flex: 1; display: flex; gap: 4px; justify-content: flex-end; align-items: center; padding-right: 177px; }
.model { margin-right: 4px; }
.status-end { display: flex; gap: 1px; }
.emblem { position: absolute; right: 60px; bottom: 8px; }
.ring-text { font-size: 7px; font-weight: 600; fill: #477c7d; }
.name { font-size: 33px; font-weight: 700; text-anchor: middle; fill: #40858a; filter: drop-shadow(-2px 0 0 #29434a); }
</style>
